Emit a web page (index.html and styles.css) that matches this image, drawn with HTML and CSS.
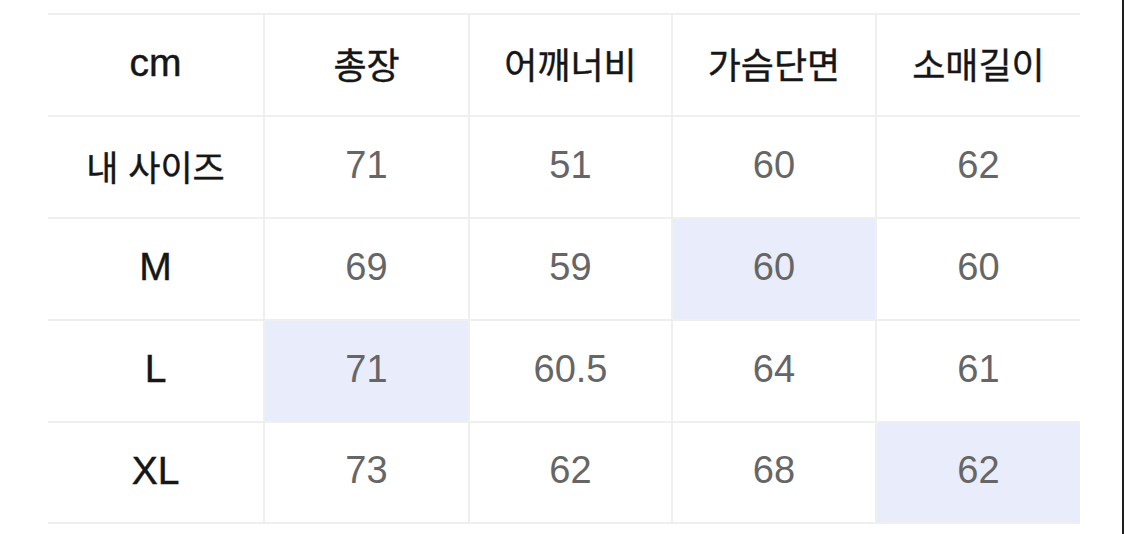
FILE: index.html
```html
<!DOCTYPE html>
<html lang="ko">
<head>
<meta charset="utf-8">
<title>사이즈표</title>
<link rel="stylesheet" href="styles.css">
</head>
<body>
<div class="frame">
  <div class="size-table">
    <div class="cell head latin">cm</div>
    <div class="cell head">총장</div>
    <div class="cell head">어깨너비</div>
    <div class="cell head">가슴단면</div>
    <div class="cell head last">소매길이</div>

    <div class="cell label">내 사이즈</div>
    <div class="cell num">71</div>
    <div class="cell num">51</div>
    <div class="cell num">60</div>
    <div class="cell num last">62</div>

    <div class="cell label latin">M</div>
    <div class="cell num">69</div>
    <div class="cell num">59</div>
    <div class="cell num hl">60</div>
    <div class="cell num last">60</div>

    <div class="cell label latin">L</div>
    <div class="cell num hl">71</div>
    <div class="cell num">60.5</div>
    <div class="cell num">64</div>
    <div class="cell num last">61</div>

    <div class="cell label latin">XL</div>
    <div class="cell num">73</div>
    <div class="cell num">62</div>
    <div class="cell num">68</div>
    <div class="cell num last hl">62</div>
  </div>
</div>
</body>
</html>
```

FILE: styles.css
```css
html, body {
  margin: 0;
  padding: 0;
  background: #ffffff;
}

.frame {
  width: 1124px;
  height: 534px;
  border-right: 2px solid #1c1c1c;
  padding: 13px 0 0 48px;
  box-sizing: border-box;
}

.size-table {
  display: grid;
  grid-template-columns: 217px 205px 203px 204px 203px;
  grid-template-rows: 102px 102px 102px 102px 101px;
  border-top: 2px solid #efefef;
  width: 1032px;
}

.cell {
  display: flex;
  align-items: center;
  justify-content: center;
  border-bottom: 2px solid #efefef;
  border-right: 2px solid #efefef;
  box-sizing: border-box;
  font-family: "Noto Sans CJK KR", "Liberation Sans", sans-serif;
  color: #1a1a1a;
  padding-bottom: 4px;
}

.cell.last {
  border-right: none;
}

.head {
  font-size: 36px;
  font-weight: 400;
  color: #161616;
  -webkit-text-stroke: 0.4px #161616;
}

.label {
  font-size: 35px;
  font-weight: 400;
  color: #161616;
  -webkit-text-stroke: 0.4px #161616;
}

.latin {
  font-family: "Liberation Sans", Arial, sans-serif;
  font-size: 39px;
  font-weight: 400;
  -webkit-text-stroke: 0.45px #161616;
}

.num {
  font-family: "Liberation Sans", Arial, sans-serif;
  font-size: 38px;
  color: #666666;
}

.hl {
  background: #e8ecfb;
}
```
